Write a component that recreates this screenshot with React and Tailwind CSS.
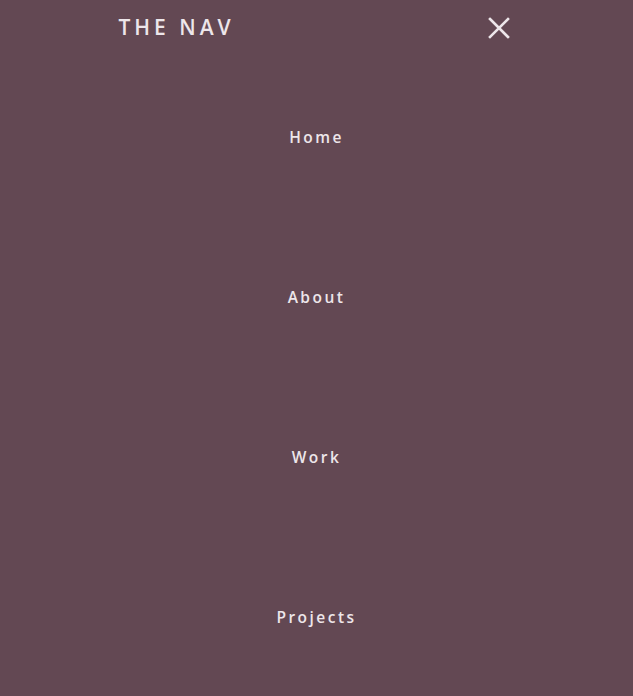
const LINKS = ["Home", "About", "Work", "Projects"];

function CloseIcon() {
  return (
    <svg width="22" height="22" viewBox="0 0 22 22" fill="none" className="mr-[5px]">
      <path d="M2 2L20 20M20 2L2 20" stroke="currentColor" strokeWidth="2.6" strokeLinecap="square" />
    </svg>
  );
}

export default function App() {
  return (
    <div
      className="min-h-[696px] bg-[#634853] text-[#ede6ea]"
      style={{ fontFamily: '"Open Sans", sans-serif' }}
    >
      <header className="mx-auto flex h-14 w-[400px] items-center justify-between px-[2px]">
        <span className="text-[21px] font-semibold tracking-[0.19em]">THE NAV</span>
        <CloseIcon />
      </header>
      <nav className="flex flex-col">
        {LINKS.map((label) => (
          <a
            key={label}
            href="#"
            className="flex h-40 items-center justify-center pt-[4px] text-[15.5px] font-semibold tracking-[0.16em]"
          >
            {label}
          </a>
        ))}
      </nav>
    </div>
  );
}
